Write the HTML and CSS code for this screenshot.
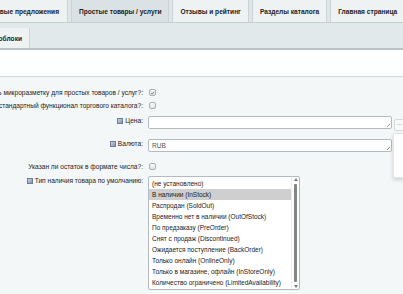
FILE: index.html
```html
<!DOCTYPE html>
<html lang="ru">
<head>
<meta charset="utf-8">
<link rel="stylesheet" href="styles.css">
</head>
<body>
<div class="tabs">
  <div class="tab tab-first"><span>Торговые предложения</span></div>
  <div class="tab active">Простые товары / услуги</div>
  <div class="tab">Отзывы и рейтинг</div>
  <div class="tab">Разделы каталога</div>
  <div class="tab">Главная страница</div>
</div>
<div class="subbar">
  <div class="subtab"><span>Инфоблоки</span></div>
</div>
<div class="strip"></div>
<div class="content">
  <div class="row">
    <div class="label"><span>Использовать микроразметку для простых товаров / услуг?:</span></div>
    <div class="ctrl"><span class="cb checked"><svg viewBox="0 0 7 7" width="7" height="7"><path d="M1.5 3.6 L3 5 L5.6 1.8" fill="none" stroke="#555" stroke-width="1"/></svg></span></div>
  </div>
  <div class="row">
    <div class="label"><span>Использовать стандартный функционал торгового каталога?:</span></div>
    <div class="ctrl"><span class="cb"></span></div>
  </div>
  <div class="row row-area row-price">
    <div class="label top"><span><i class="help"></i>Цена:</span></div>
    <div class="ctrl"><div class="area"></div></div>
  </div>
  <div class="row row-area row-currency">
    <div class="label top"><span><i class="help"></i>Валюта:</span></div>
    <div class="ctrl"><div class="area">RUB</div></div>
  </div>
  <div class="row row-stock">
    <div class="label"><span>Указан ли остаток в формате числа?:</span></div>
    <div class="ctrl"><span class="cb"></span></div>
  </div>
  <div class="row row-list">
    <div class="label top"><span><i class="help"></i>Тип наличия товара по умолчанию:</span></div>
    <div class="ctrl">
      <div class="listbox">
        <div class="options">
          <div class="opt">(не установлено)</div>
          <div class="opt sel">В наличии (InStock)</div>
          <div class="opt">Распродан (SoldOut)</div>
          <div class="opt">Временно нет в наличии (OutOfStock)</div>
          <div class="opt">По предзаказу (PreOrder)</div>
          <div class="opt">Снят с продаж (Discontinued)</div>
          <div class="opt">Ожидается поступление (BackOrder)</div>
          <div class="opt">Только онлайн (OnlineOnly)</div>
          <div class="opt">Только в магазине, офлайн (InStoreOnly)</div>
          <div class="opt">Количество ограничено (LimitedAvailability)</div>
        </div>
        <div class="sbar">
          <span class="arr up"></span>
          <span class="thumb"></span>
          <span class="arr down"></span>
        </div>
      </div>
    </div>
  </div>
</div>
<div class="dots">...</div>
<div class="popup"></div>
</body>
</html>
```
FILE: styles.css
```css
html, body {
  margin: 0;
  padding: 0;
}
body {
  width: 403px;
  height: 294px;
  overflow: hidden;
  position: relative;
  background: #f4f7f8;
  font-family: "Liberation Sans", Arial, sans-serif;
  color: #222;
}
.tabs {
  display: flex;
  gap: 3px;
  height: 23px;
  background: #dfe6e8;
  border-bottom: 1px solid #c5ced1;
  box-sizing: border-box;
}
.tab {
  display: flex;
  align-items: center;
  padding: 0 7px;
  height: 22px;
  background: #eef2f3;
  border: 1px solid #ccd4d7;
  border-top: none;
  border-bottom: none;
  font-weight: bold;
  font-size: 6.6px;
  white-space: nowrap;
  color: #222;
  flex: none;
}
.tab-first {
  width: 68px;
  box-sizing: border-box;
  justify-content: flex-end;
  border-left: none;
  padding-right: 8px;
}
.tab.active {
  background: #dbe2e5;
}
.subbar {
  height: 25px;
  background: #e2e9eb;
  border-bottom: 2px solid #bcc4c7;
  display: flex;
  align-items: flex-end;
}
.subtab {
  width: 30px;
  height: 20px;
  box-sizing: border-box;
  padding-right: 7px;
  display: flex;
  align-items: center;
  justify-content: flex-end;
  background: #eef2f3;
  border-right: 1px solid #ccd4d7;
  font-weight: bold;
  font-size: 6.6px;
  white-space: nowrap;
}
.strip {
  height: 26px;
  background: #fdfefe;
  border-bottom: 1px solid #d3dadd;
}
.content {
  padding-top: 9px;
  font-size: 6.6px;
}
.row {
  display: grid;
  grid-template-columns: 148px 1fr;
  height: 13px;
  align-items: center;
}
.label {
  display: flex;
  justify-content: flex-end;
  padding-right: 5px;
  white-space: nowrap;
  line-height: 9px;
}
.label.top {
  align-self: start;
}
.ctrl {
  display: flex;
  align-items: center;
}
.cb {
  width: 7px;
  height: 7px;
  box-sizing: border-box;
  border: 1px solid #a8b1b5;
  border-radius: 2px;
  background: linear-gradient(#fafbfb, #dfe3e5);
  display: inline-flex;
  align-items: center;
  justify-content: center;
  margin-left: 1px;
}
.cb svg {
  display: block;
  width: 6px;
  height: 6px;
}
.help {
  display: inline-block;
  width: 6px;
  height: 6px;
  margin-right: 2px;
  vertical-align: -0.5px;
  box-sizing: border-box;
  border: 1px solid #6f7f99;
  background: linear-gradient(135deg, #c9d3e3, #8393ad);
}
.row-area {
  height: 13px;
  align-items: start;
}
.row-price { margin-top: 4px; }
.row-currency { margin-top: 10px; }
.row-stock { margin-top: 8px; }
.row-list { margin-top: 3px; height: auto; align-items: start; }
.area {
  width: 244px;
  height: 13px;
  box-sizing: border-box;
  border: 1px solid #b2bcc0;
  border-radius: 2px;
  background: #fff;
  padding: 2px 3px;
  line-height: 8px;
  color: #555;
  position: relative;
}
.area::after {
  content: "";
  position: absolute;
  right: 1px;
  bottom: 1px;
  width: 3px;
  height: 3px;
  background: linear-gradient(135deg, transparent 45%, #999 45%, #999 60%, transparent 60%);
}
.listbox {
  width: 152px;
  height: 114px;
  box-sizing: border-box;
  border: 1px solid #b2bcc0;
  border-radius: 2px;
  background: #fff;
  display: flex;
  font-size: 6.5px;
}
.options {
  flex: 1;
  padding-top: 1px;
}
.opt {
  height: 11px;
  line-height: 11px;
  padding-left: 3px;
  white-space: nowrap;
  color: #222;
}
.opt.sel {
  background: #cfcfcf;
}
.sbar {
  width: 7px;
  display: flex;
  flex-direction: column;
  align-items: center;
  padding: 1px 0;
  border-left: 1px solid #eee;
}
.arr {
  width: 0;
  height: 0;
  border-left: 2px solid transparent;
  border-right: 2px solid transparent;
  flex: none;
}
.arr.up {
  border-bottom: 3px solid #777;
}
.arr.down {
  border-top: 3px solid #777;
}
.thumb {
  flex: 1;
  width: 3px;
  margin: 3px 0;
  background: #858585;
  border-radius: 1px;
}
.dots {
  position: absolute;
  left: 394px;
  top: 119px;
  width: 14px;
  height: 12px;
  box-sizing: border-box;
  border: 1px solid #d5dadc;
  border-radius: 2px;
  background: #f8f9f9;
  font-size: 6px;
  line-height: 7px;
  padding-left: 2px;
  color: #555;
}
.popup {
  position: absolute;
  left: 393px;
  top: 133px;
  width: 20px;
  height: 43px;
  background: #fff;
  box-shadow: 0 2px 4px rgba(0,0,0,0.15);
  border: 1px solid #e2e6e8;
}
```
